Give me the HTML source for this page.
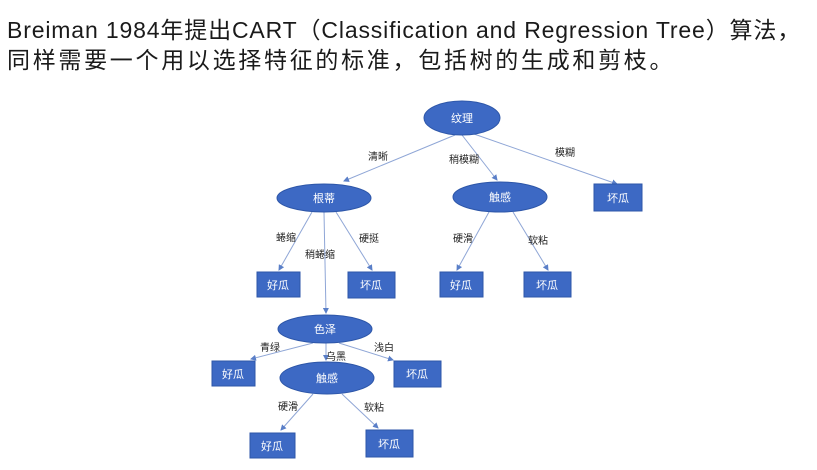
<!DOCTYPE html>
<html><head><meta charset="utf-8"><style>
body{margin:0;width:817px;height:470px;background:#fff;overflow:hidden;position:relative;font-family:"Liberation Sans","Noto Sans CJK SC",sans-serif;color:#1a1a1a}
.l{position:absolute;left:7px;white-space:nowrap;font-size:23px}
</style></head><body>
<div class="l" style="top:11px;letter-spacing:0.85px">Breiman 1984年提出CART（Classification and Regression Tree）算法，</div>
<div class="l" style="top:41px;letter-spacing:2.7px">同样需要一个用以选择特征的标准，包括树的生成和剪枝。</div>
<svg width="817" height="470" style="position:absolute;left:0;top:0" font-family="Liberation Sans,Noto Sans CJK SC,sans-serif">
<defs><marker id="a" markerWidth="6" markerHeight="6" refX="5" refY="3" orient="auto"><path d="M0,0L6,3L0,6z" fill="#5a7fc8"/></marker></defs>
<g stroke="#8fa6d6" stroke-width="1" marker-end="url(#a)">
<line x1="455" y1="135" x2="344" y2="181"/>
<line x1="462" y1="135" x2="497" y2="180"/>
<line x1="474" y1="134" x2="617" y2="184"/>
<line x1="312" y1="212" x2="279" y2="270"/>
<line x1="336" y1="212" x2="372" y2="270"/>
<line x1="324" y1="212" x2="326" y2="313"/>
<line x1="489" y1="212" x2="457" y2="270"/>
<line x1="513" y1="212" x2="548" y2="270"/>
<line x1="313" y1="343" x2="251" y2="359"/>
<line x1="326" y1="343" x2="326" y2="360"/>
<line x1="339" y1="343" x2="393" y2="360"/>
<line x1="313" y1="394" x2="281" y2="430"/>
<line x1="342" y1="394" x2="378" y2="428"/>
</g>
<g fill="#3d69c4" stroke="#2d56a8" stroke-width="1">
<ellipse cx="462" cy="118" rx="38" ry="17"/>
<ellipse cx="324" cy="198" rx="47" ry="14"/>
<ellipse cx="500" cy="197" rx="47" ry="15"/>
<ellipse cx="325" cy="329" rx="47" ry="14"/>
<ellipse cx="327" cy="378" rx="47" ry="16"/>
<rect x="594" y="184" width="48" height="27"/>
<rect x="257" y="272" width="43" height="25"/>
<rect x="348" y="272" width="47" height="26"/>
<rect x="440" y="272" width="43" height="25"/>
<rect x="524" y="272" width="47" height="25"/>
<rect x="212" y="361" width="43" height="25"/>
<rect x="394" y="361" width="47" height="26"/>
<rect x="250" y="433" width="45" height="25"/>
<rect x="366" y="430" width="47" height="27"/>
</g>
<g fill="#fff" font-size="11" text-anchor="middle">
<text x="462" y="122">纹理</text><text x="324" y="202">根蒂</text><text x="500" y="201">触感</text>
<text x="325" y="333">色泽</text><text x="327" y="382">触感</text>
<text x="618" y="202">坏瓜</text><text x="278" y="289">好瓜</text><text x="371" y="289">坏瓜</text>
<text x="461" y="289">好瓜</text><text x="547" y="289">坏瓜</text><text x="233" y="378">好瓜</text>
<text x="417" y="378">坏瓜</text><text x="272" y="450">好瓜</text><text x="389" y="448">坏瓜</text>
</g>
<g fill="#222" font-size="10" text-anchor="middle">
<text x="378" y="160">清晰</text><text x="464" y="163">稍模糊</text><text x="565" y="156">模糊</text>
<text x="286" y="241">蜷缩</text><text x="320" y="258">稍蜷缩</text><text x="369" y="242">硬挺</text>
<text x="463" y="242">硬滑</text><text x="538" y="244">软粘</text>
<text x="270" y="351">青绿</text><text x="336" y="360">乌黑</text><text x="384" y="351">浅白</text>
<text x="288" y="410">硬滑</text><text x="374" y="411">软粘</text>
</g>
</svg>
</body></html>
